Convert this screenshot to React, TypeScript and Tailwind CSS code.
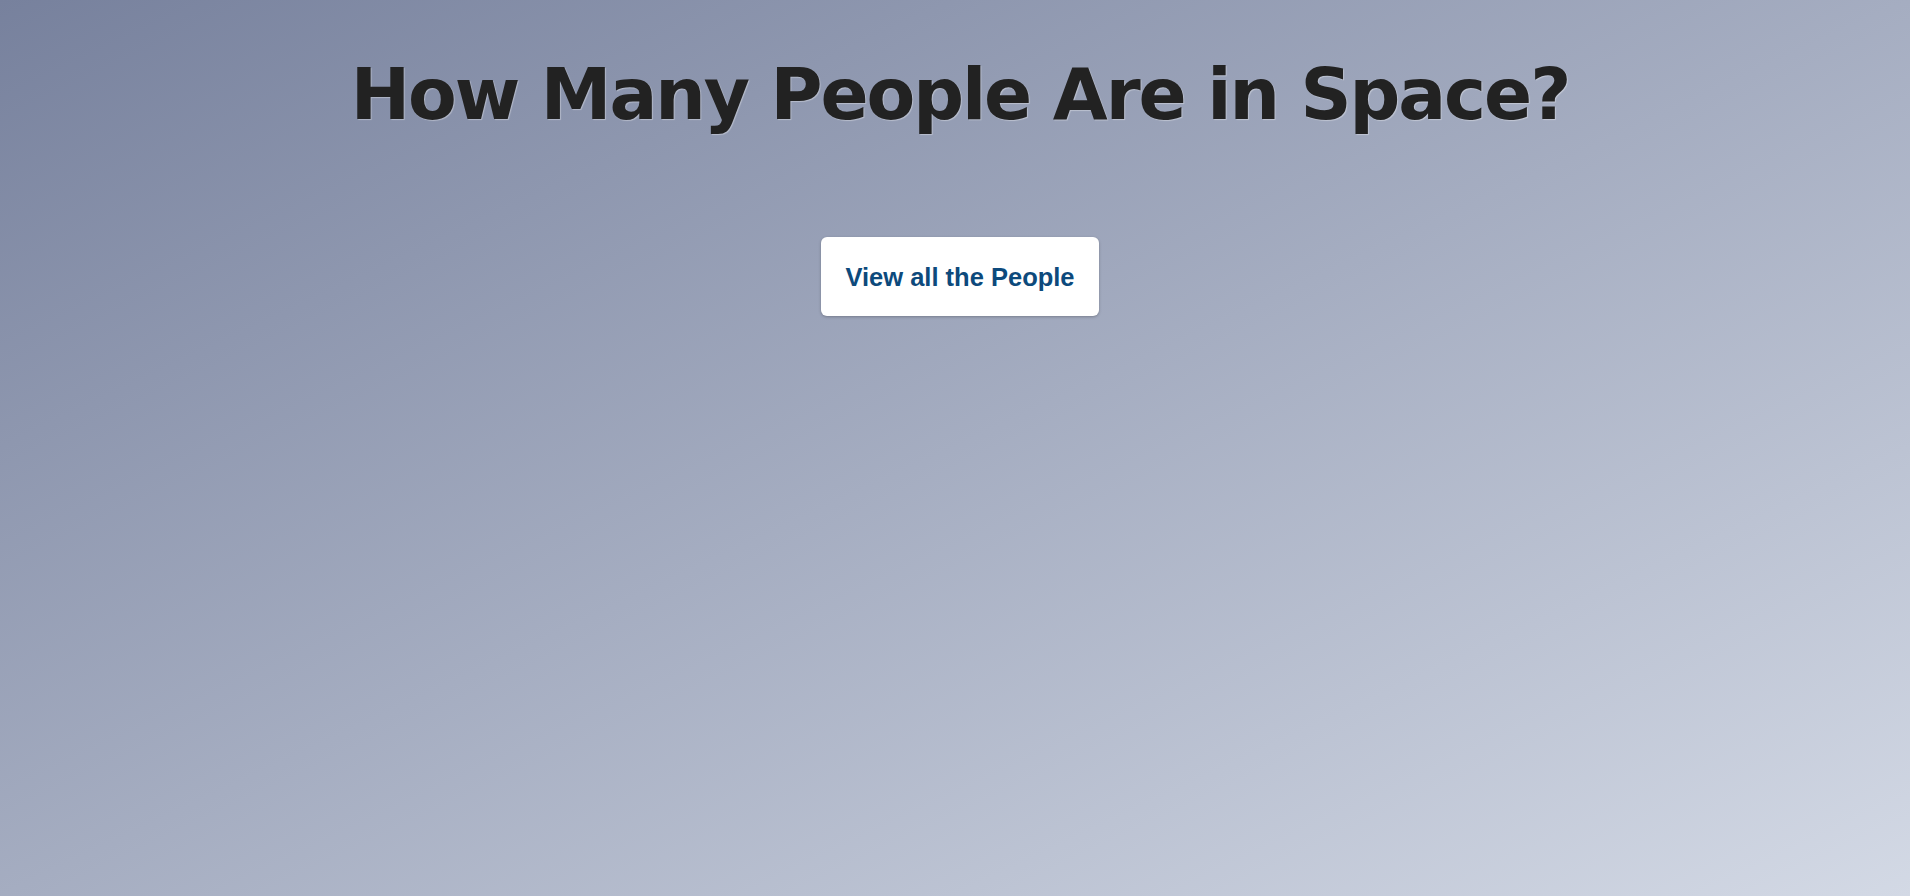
export default function App() {
  return (
    <div className="min-h-screen w-full bg-[linear-gradient(to_bottom_right,#77819d,#d3d9e5)] pl-[10px]">
      <div className="flex flex-col items-center pt-[52px]">
        <h1 className="font-['DejaVu_Sans',Verdana,sans-serif] text-[71px] font-bold leading-[1.2] tracking-[-2.1px] text-[#222222] [text-shadow:1px_1px_1px_rgba(255,255,255,0.35)]">
          How Many People Are in Space?
        </h1>
        <button className="mt-[100px] h-[79px] w-[278px] rounded-md bg-white font-['Liberation_Sans',Arial,sans-serif] text-[25.5px] font-bold text-[#0d4a7c] shadow-[0_1px_3px_rgba(0,0,0,0.25)]">
          View all the People
        </button>
      </div>
    </div>
  );
}
